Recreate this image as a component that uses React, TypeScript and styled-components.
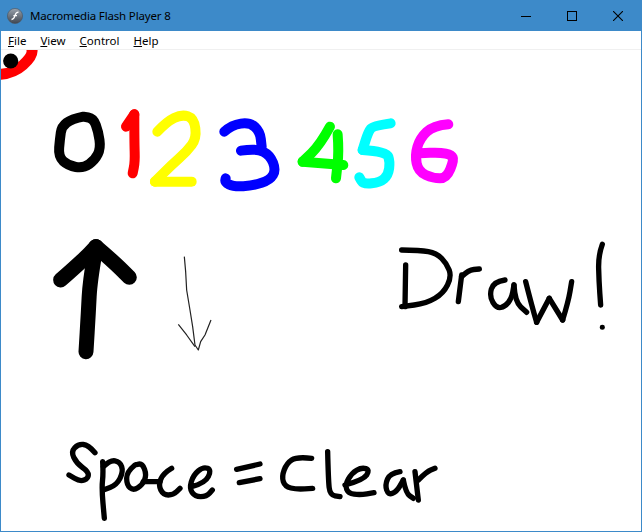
import styled, { createGlobalStyle } from "styled-components";

const GlobalStyle = createGlobalStyle`
  html, body {
    margin: 0;
    padding: 0;
    background: #ffffff;
  }
`;

// strokes were traced off 3x crops, so each group keeps the crop's own coordinates
const smooth = (points: string) => {
  const pts = points
    .trim()
    .split(/\s+/)
    .map((p) => p.split(",").map(Number));
  let d = `M${pts[0][0]} ${pts[0][1]}`;
  for (let i = 1; i < pts.length - 1; i++) {
    const mx = (pts[i][0] + pts[i + 1][0]) / 2;
    const my = (pts[i][1] + pts[i + 1][1]) / 2;
    d += ` Q${pts[i][0]} ${pts[i][1]} ${mx} ${my}`;
  }
  const last = pts[pts.length - 1];
  return `${d} L${last[0]} ${last[1]}`;
};

const digits = [
  { color: "#000000", lines: ["130,65 95,72 65,95 60,130 55,185 85,212 130,220 165,195 182,160 175,110 160,70 130,65"] },
  { color: "#ff0000", lines: ["258,95 283,58", "283,58 283,140 285,200 278,235"] },
  { color: "#ffff00", lines: ["352,110 380,80 425,58 462,70 470,130 440,170 395,210 345,260", "345,260 455,260"] },
  {
    color: "#0000ff",
    lines: [
      "553,110 575,90 630,82 660,110 665,155",
      "603,167 650,160 690,180 708,225 690,255 640,272 580,275 555,262 557,250",
    ],
  },
  { color: "#00ff00", lines: ["870,95 840,150 788,200", "788,200 910,210", "893,118 897,170 888,250"] },
  {
    color: "#00ffff",
    lines: ["1052,85 1000,92 985,110 968,165", "968,165 1040,170 1050,200 1045,240 1020,262 970,268 958,247"],
  },
  { color: "#ff00ff", lines: ["1225,88 1180,92 1140,130 1125,180 1135,230 1180,250 1220,250 1242,195 1235,180 1200,172 1140,175"] },
];

const drawWord = [
  "35,45 90,45 140,55 170,85 185,125 160,175 110,205 35,215",
  "47,90 45,215",
  "215,120 205,200",
  "215,125 235,105 268,102",
  "345,135 310,140 298,185 320,220 345,215 365,190 372,150",
  "372,150 375,200 410,232",
  "407,140 425,210 440,262",
  "440,262 478,190",
  "478,190 518,255",
  "518,255 535,200 545,140",
  "637,28 625,60 627,140 632,210",
];

const spaceWord = [
  "120,68 100,45 70,42 48,65 65,100 100,125 100,145 75,155 42,135",
  "143,95 145,130 140,175 148,265",
  "145,110 165,90 195,95 205,125 185,165 145,180",
  "240,105 215,125 215,165 235,182 262,165 275,135 262,100 240,105",
  "265,155 315,155",
  "350,115 325,130 310,165 325,195 355,195 375,175",
  "410,170 450,160 470,120 445,110 415,135 403,175 420,200 455,200 472,180",
  "545,118 615,102",
  "553,158 615,146",
];

const clearWord = [
  "185,85 140,80 110,100 95,140 105,170 140,178 188,175",
  "233,65 235,150 240,195 270,200",
  "285,165 340,150 360,120 335,112 305,130 285,165 295,190 330,195 372,188",
  "450,125 420,130 405,165 415,195 440,185 460,150",
  "460,150 468,190 490,205",
  "495,125 505,210",
  "505,150 530,125 555,115",
];

const Strokes = ({ lines, color, width }: { lines: string[]; color: string; width: number }) => (
  <>
    {lines.map((line) => (
      <path key={line} d={smooth(line)} stroke={color} strokeWidth={width} />
    ))}
  </>
);

const menuItems = [
  { key: "F", rest: "ile" },
  { key: "V", rest: "iew" },
  { key: "C", rest: "ontrol" },
  { key: "H", rest: "elp" },
];

export default function App() {
  return (
    <Window>
      <GlobalStyle />
      <TitleBar>
        <svg width="16" height="16" viewBox="0 0 16 16">
          <defs>
            <linearGradient id="flashBall" x1="0" y1="0" x2="0" y2="1">
              <stop offset="0" stopColor="#9aa3ad" />
              <stop offset="1" stopColor="#3f4650" />
            </linearGradient>
          </defs>
          <circle cx="8" cy="8" r="7.6" fill="url(#flashBall)" stroke="#4b525c" strokeWidth="0.6" />
          <path d="M4.5 11.5C7 11.5 7.4 9.5 8 7.5C8.5 5.6 9 4.3 11.5 4.2M6.4 7.6H10" stroke="#ffffff" strokeWidth="1.3" fill="none" />
        </svg>
        <TitleText>Macromedia Flash Player 8</TitleText>
        <WindowControls>
          <ControlButton>
            <svg width="10" height="10" viewBox="0 0 10 10">
              <path d="M0 5.5H10" stroke="#000" />
            </svg>
          </ControlButton>
          <ControlButton>
            <svg width="10" height="10" viewBox="0 0 10 10">
              <rect x="0.5" y="0.5" width="9" height="9" fill="none" stroke="#000" />
            </svg>
          </ControlButton>
          <ControlButton>
            <svg width="10" height="10" viewBox="0 0 10 10">
              <path d="M0 0L10 10M10 0L0 10" stroke="#000" strokeWidth="1.1" />
            </svg>
          </ControlButton>
        </WindowControls>
      </TitleBar>
      <MenuBar>
        {menuItems.map((item) => (
          <MenuItem key={item.key}>
            <u>{item.key}</u>
            {item.rest}
          </MenuItem>
        ))}
      </MenuBar>
      <Canvas viewBox="1 50 640 481" role="img" aria-label="Freehand drawing: 0123456, an up arrow, a down arrow, Draw!, Space = Clear">
        <g fill="none" strokeLinecap="round" strokeLinejoin="round">
          <path d="M-2 74.5Q13 74 23 65T32 50" stroke="#ff0000" strokeWidth="11" />
          <circle cx="10.7" cy="61" r="7.6" fill="#000000" />
          <g transform="translate(40 95) scale(0.3333)">
            {digits.map((digit) => (
              <Strokes key={digit.color} lines={digit.lines} color={digit.color} width={30} />
            ))}
          </g>
          <g transform="translate(40 230) scale(0.3333)">
            <Strokes lines={["168,50 150,150 145,250 138,365", "62,150 130,90 168,50", "168,50 215,90 268,142"]} color="#000000" width={45} />
            <g strokeLinecap="butt">
              <polyline points="433,80 437,125 440,180 450,240 458,290 465,345 475,360 482,335 495,315 513,270" stroke="#222222" strokeWidth={3.6} />
              <polyline points="415,283 440,315 465,350" stroke="#222222" strokeWidth={3.6} />
            </g>
          </g>
          <g transform="translate(390 235) scale(0.3333)">
            <Strokes lines={drawWord} color="#000000" width={16} />
            <circle cx="637" cy="277" r="7.5" fill="#000000" />
          </g>
          <g transform="translate(55 430) scale(0.3333)">
            <Strokes lines={spaceWord} color="#000000" width={16} />
          </g>
          <g transform="translate(250 430) scale(0.3333)">
            <Strokes lines={clearWord} color="#000000" width={16} />
          </g>
        </g>
      </Canvas>
    </Window>
  );
}

const Window = styled.div`
  display: flex;
  flex-direction: column;
  width: 642px;
  height: 532px;
  box-sizing: border-box;
  border: 1px solid #3d8ac9;
  border-top: none;
  background: #ffffff;
  overflow: hidden;
`;

const TitleBar = styled.div`
  display: flex;
  align-items: center;
  flex: 0 0 31px;
  padding-left: 6px;
  gap: 7px;
  background: #3d8ac9;
`;

const TitleText = styled.span`
  flex: 1;
  font: 11.5px "Noto Sans", "Open Sans", sans-serif;
  letter-spacing: -0.16px;
  color: #000000;
`;

const WindowControls = styled.div`
  display: flex;
  height: 100%;
`;

const ControlButton = styled.div`
  display: flex;
  align-items: center;
  justify-content: center;
  width: 46px;
`;

const MenuBar = styled.div`
  display: flex;
  flex: 0 0 18px;
  align-items: center;
  background: #ffffff;
  border-bottom: 1px solid #f0f0f0;
  box-sizing: content-box;
`;

const MenuItem = styled.span`
  padding: 0 7px;
  font: 11.5px "Noto Sans", "Open Sans", sans-serif;
  color: #000000;
`;

const Canvas = styled.svg`
  display: block;
  flex: 1;
  min-height: 0;
  width: 100%;
`;
